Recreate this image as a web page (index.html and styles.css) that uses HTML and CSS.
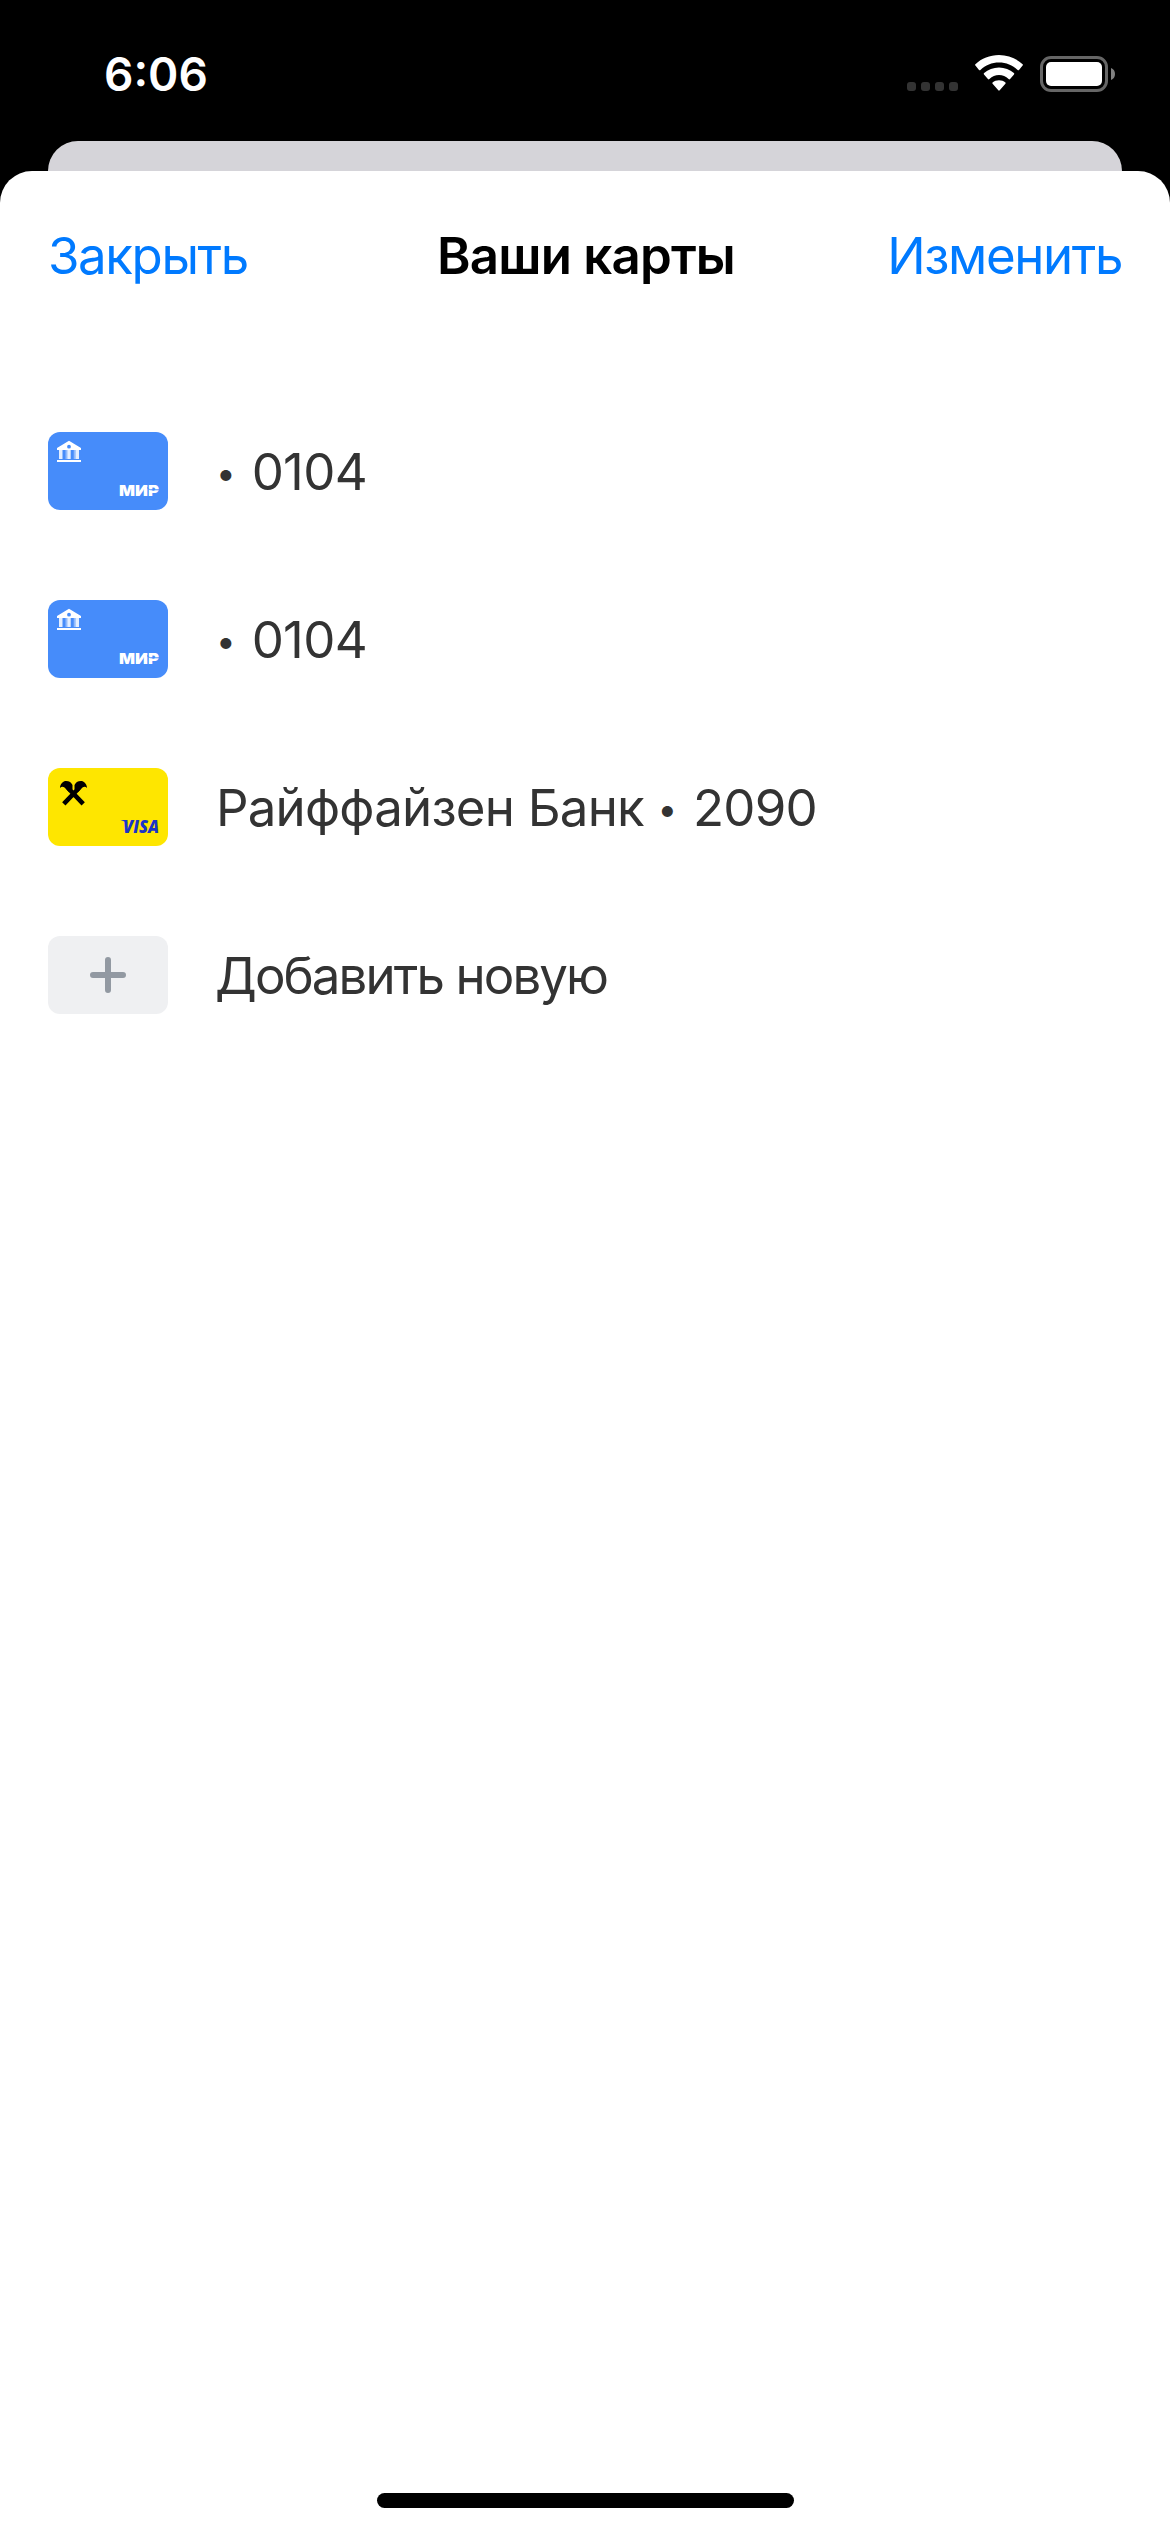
FILE: index.html
```html
<!DOCTYPE html>
<html lang="ru">
<head>
<meta charset="utf-8">
<title>Ваши карты</title>
<link rel="stylesheet" href="styles.css">
</head>
<body>
<div class="screen">
  <header class="status">
    <span class="time">6:06</span>
    <span class="indicators">
      <span class="dots"><i></i><i></i><i></i><i></i></span>
      <svg class="wifi" width="48" height="36" viewBox="0 0 48 36" fill="#fff">
        <path d="M24 0C14.800 0 6.500 3.500.4 9.200q-.7.700 0 1.400L4 14.900q.7.700 1.400 0C10.400 10 16.900 7.400 24 7.400S37.600 10 42.600 14.900q.7.700 1.400 0l3.600-4.300q.7-.7 0-1.400C41.500 3.500 33.200 0 24 0z"/>
        <path d="M24 12.600c-5.700 0-10.900 2.100-14.900 5.500q-.8.700-.1 1.400l3.900 4.500q.7.700 1.500.1c2.700-2.600 6-4 9.600-4s6.900 1.400 9.600 4q.8.600 1.500-.1l3.900-4.500q.7-.7-.1-1.400c-4-3.400-9.200-5.500-14.900-5.500z"/>
        <path d="M24 25.200c-2.500 0-4.700.9-6.400 2.300q-.7.600 0 1.300l5.700 6.500q.7.700 1.400 0l5.700-6.500q.7-.7 0-1.300C28.700 26.100 26.500 25.200 24 25.200z"/>
      </svg>
      <svg class="battery" width="75" height="36" viewBox="0 0 75 36">
        <rect x="1.500" y="1.500" width="65" height="33" rx="9.500" fill="none" stroke="#666" stroke-width="3"/>
        <rect x="6" y="6" width="56" height="24" rx="5" fill="#fff"/>
        <path fill="#808080" d="M71 12c2.600 1 4 3.300 4 6s-1.400 5-4 6z"/>
      </svg>
    </span>
  </header>
  <div class="back-sheet"></div>
  <main class="sheet">
    <nav class="bar">
      <a class="action close">Закрыть</a>
      <h1>Ваши карты</h1>
      <a class="action edit">Изменить</a>
    </nav>
    <ul class="cards">
      <li>
        <svg class="card blue" viewBox="0 0 120 78">
          <path fill="#fff" fill-rule="evenodd" d="M9 16 21 8.800 33 16v2H9zM21 12.800a1.900 1.900 0 1 0 0 3.800 1.900 1.900 0 0 0 0-3.800z"/>
          <path fill="#fff" fill-opacity=".85" d="M11 18h3.500v9H11zM19.300 18h3.400v9h-3.400zM27.500 18H31v9h-3.500z"/>
          <path fill="#fff" fill-opacity=".4" d="M17.500 18h1.800v9h-1.800zM25.700 18h1.800v9h-1.800z"/>
          <path fill="#fff" d="M9 28h24v2H9z"/>
          <text class="mir" x="71" y="64" textLength="40" lengthAdjust="spacingAndGlyphs">МИР</text>
          <path stroke="#468cfa" fill="none" d="M99 55.500c2 2 3 2.300 5 2.300h8"/>
        </svg>
        <span class="num"><span class="dot">•</span> 0104</span>
      </li>
      <li>
        <svg class="card blue" viewBox="0 0 120 78">
          <path fill="#fff" fill-rule="evenodd" d="M9 16 21 8.800 33 16v2H9zM21 12.800a1.900 1.900 0 1 0 0 3.800 1.900 1.900 0 0 0 0-3.800z"/>
          <path fill="#fff" fill-opacity=".85" d="M11 18h3.500v9H11zM19.300 18h3.400v9h-3.400zM27.500 18H31v9h-3.500z"/>
          <path fill="#fff" fill-opacity=".4" d="M17.500 18h1.800v9h-1.800zM25.700 18h1.800v9h-1.800z"/>
          <path fill="#fff" d="M9 28h24v2H9z"/>
          <text class="mir" x="71" y="64" textLength="40" lengthAdjust="spacingAndGlyphs">МИР</text>
          <path stroke="#468cfa" fill="none" d="M99 55.500c2 2 3 2.300 5 2.300h8"/>
        </svg>
        <span class="num"><span class="dot">•</span> 0104</span>
      </li>
      <li>
        <svg class="card yellow" viewBox="0 0 120 78">
          <path stroke="#000" stroke-width="4.600" fill="none" d="M15.800 35.800 31 20M35.200 35.800 20 20"/>
          <path d="M12 20c-.2-2.500 2-6.500 5.500-7 3.500-.2 6 1.500 7 4v4.500l-3.500 2.500-4.500-4.500c-1.500-1-3.300-.8-4.500.5zM39 20c.2-2.500-2-6.500-5.500-7-3.500-.2-6 1.500-7 4v4.500l3.500 2.500 4.500-4.500c1.500-1 3.300-.8 4.500.5z"/>
          <text class="visa" x="75" y="65" textLength="36" lengthAdjust="spacingAndGlyphs">VISA</text>
          <path fill="#1a34c8" d="M72.500 52h6l1 3.500q-2.500-2.500-7-3.500z"/>
        </svg>
        <span class="bank">Райффайзен Банк <span class="dot">•</span> 2090</span>
      </li>
      <li>
        <svg class="card gray" viewBox="0 0 120 78"><path stroke="#9299a2" stroke-width="6" stroke-linecap="round" d="M45 39h30M60 24v30"/></svg>
        <span class="add">Добавить новую</span>
      </li>
    </ul>
    <div class="home"></div>
  </main>
</div>
</body>
</html>
```
FILE: styles.css
```css
* { box-sizing: border-box; margin: 0; padding: 0; }
body { background: #000; font-family: Inter, "Liberation Sans", sans-serif; }
.screen { width: 1170px; height: 2532px; display: flex; flex-direction: column; background: #000; overflow: hidden; }
.status { height: 141px; flex: none; display: flex; justify-content: space-between; align-items: flex-start; padding: 55px 55px 0 104px; }
.time { font-size: 46px; line-height: 39px; font-weight: 600; color: #fff; letter-spacing: 0; }
.indicators { display: flex; height: 37px; align-items: flex-start; }
.dots { display: flex; gap: 5px; margin: 27px 17px 0 0; }
.dots i { width: 9px; height: 9px; border-radius: 3px; background: #333; }
.battery { margin: 1px 0 0 17px; }
.back-sheet { height: 60px; flex: none; margin: 0 48px -30px; border-radius: 30px 30px 0 0; background: #d5d4d9; clip-path: inset(0 0 30px 0); }
.sheet { flex: 1; display: flex; flex-direction: column; background: #fff; border-radius: 32px 32px 0 0; }
.bar { display: grid; grid-template-columns: 1fr auto 1fr; align-items: center; height: 168px; padding: 1px 48px 0; }
.action, h1, .cards { font-size: 51px; line-height: 62px; white-space: nowrap; }
.action { color: #007aff; letter-spacing: -1.4px; }
.edit { justify-self: end; }
h1 { font-weight: 600; color: #000; letter-spacing: -0.8px; padding-left: 2px; }
.cards { list-style: none; padding-top: 48px; color: #333; }
.cards li { height: 168px; display: flex; align-items: center; gap: 48px; padding: 0 48px; }
.cards li > span { padding-top: 2px; }
.card { width: 120px; height: 78px; flex: none; border-radius: 12px; }
.blue { background: #468cfa; }
.yellow { background: #fee600; }
.gray { background: #eff0f2; }
.num { letter-spacing: -0.7px; }
.bank { letter-spacing: -0.8px; }
.cards .add { letter-spacing: -1.9px; margin-left: -1px; }
.dot { display: inline-block; width: 22px; font-size: 35px; line-height: 30px; text-indent: 0; vertical-align: 4px; letter-spacing: 0; }
.mir { font: 900 15px Inter, sans-serif; fill: #fff; }
.visa { font: italic 800 18px "Open Sans", sans-serif; fill: #1a34c8; }
.home { width: 417px; height: 15px; border-radius: 8px; background: #000; margin: auto auto 24px; }
```
